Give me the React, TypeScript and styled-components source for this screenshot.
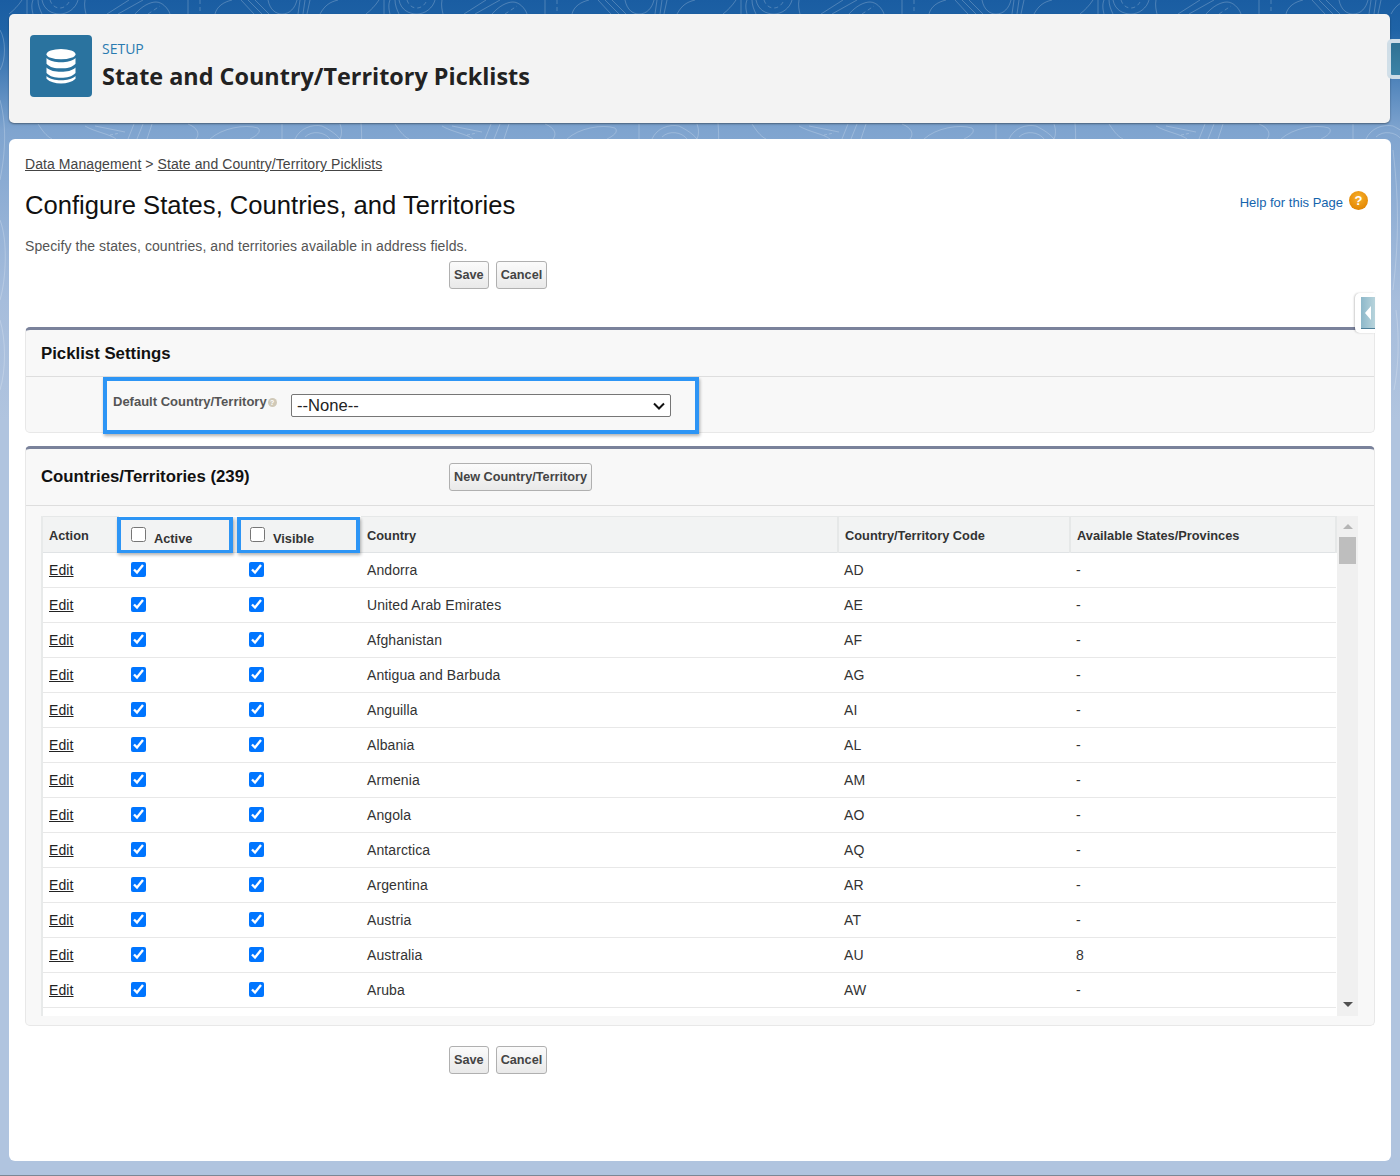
import styled, { createGlobalStyle } from "styled-components";

const GlobalStyle = createGlobalStyle`
  html, body {
    margin: 0;
    padding: 0;
  }
  body {
    font-family: "Liberation Sans", Arial, sans-serif;
    font-size: 14px;
    color: #333;
  }
`;

const countries = [
  ["Andorra", "AD", "-"],
  ["United Arab Emirates", "AE", "-"],
  ["Afghanistan", "AF", "-"],
  ["Antigua and Barbuda", "AG", "-"],
  ["Anguilla", "AI", "-"],
  ["Albania", "AL", "-"],
  ["Armenia", "AM", "-"],
  ["Angola", "AO", "-"],
  ["Antarctica", "AQ", "-"],
  ["Argentina", "AR", "-"],
  ["Austria", "AT", "-"],
  ["Australia", "AU", "8"],
  ["Aruba", "AW", "-"],
];

function ButtonRow({ top }: { top: number }) {
  return (
    <Buttons $top={top}>
      <Button>Save</Button>
      <Button>Cancel</Button>
    </Buttons>
  );
}

export default function App() {
  return (
    <Page>
      <GlobalStyle />
      <Contours width="1400" height="420">
        <defs>
          <pattern id="topo" width="357" height="420" patternUnits="userSpaceOnUse">
            <g fill="none" stroke="#fff" strokeOpacity="0.22">
              <path d="M22 0C18 6 14 10 9 14M27 0V14M33 0C31 5 32 10 33 14M38 0C38 5 40 10 42 14" />
              <path d="M42 0C44 10 52 14 60 14C68 14 76 8 78 0M85 0C84 5 85 10 86 14" />
              <path d="M50 0C52 6 56 8 60 8C64 8 68 5 70 0" strokeDasharray="4 3" />
              <path d="M129 0L107 14M143 0L118 14M135 14C142 6 150 2 156 2C162 2 168 8 170 14" />
              <path d="M148 14L160 6M200 0V14" strokeDasharray="4 3" />
              <path d="M188 0V14M215 14C217 6 224 2 232 0" />
              <path d="M241 0L254 14M248 0L262 14M255 0L269 14" />
              <path d="M268 0C270 10 276 14 282 14C290 14 295 8 297 0M300 0L298 14M305 0L303 14M310 0L307 14M320 14C325 5 330 2 338 0" />
              <path d="M38 124C42 130 46 136 52 139M85 126C95 132 110 134 116 139M95 126L125 132M134 124L128 139M143 124L137 139M152 124L147 139" />
              <path d="M110 135L120 133" strokeDasharray="3 2" />
              <path d="M188 124C198 128 200 134 196 139M210 139C222 128 245 124 258 128C262 132 256 136 250 139M282 124V139" />
              <path d="M295 139C300 128 312 124 322 126C330 130 336 134 340 139M305 137C312 130 325 132 330 139M340 124C342 130 342 134 340 139" />
              <path d="M0 30C6 40 6 60 0 70M0 100C8 130 4 160 0 180M0 220C8 240 6 280 0 300M0 320C6 340 6 370 0 390" />
              <path d="M322 150C328 200 328 240 322 290M325 310C329 340 327 370 323 390" />
            </g>
          </pattern>
        </defs>
        <rect width="1400" height="420" fill="url(#topo)" />
      </Contours>
      <HeaderCard>
        <IconTile>
          <svg width="30" height="36" viewBox="2 0 30 38" preserveAspectRatio="none">
            <ellipse cx="17" cy="6.5" rx="14.5" ry="5.5" fill="#fff" />
            <path d="M2.5 10.5C6 14 11 15 17 15s11-1 14.5-4.5v6C28 20.5 23 21.5 17 21.5S6 20.5 2.5 16.5z" fill="#fff" />
            <path d="M2.5 20.5C6 24 11 25 17 25s11-1 14.5-4.5v6C28 30.5 23 31.5 17 31.5S6 30.5 2.5 26.5z" fill="#fff" />
            <path d="M2.5 29.5C6 33 11 34 17 34s11-1 14.5-4.5v3C28 36 23 37.5 17 37.5S6 36 2.5 32.5z" fill="#fff" />
          </svg>
        </IconTile>
        <HeaderText>
          <Eyebrow>SETUP</Eyebrow>
          <HeaderTitle>State and Country/Territory Picklists</HeaderTitle>
        </HeaderText>
      </HeaderCard>
      <EdgeTab />

      <MainCard>
        <Breadcrumb>
          <a>Data Management</a> &gt; <a>State and Country/Territory Picklists</a>
        </Breadcrumb>
        <TitleRow>
          <PageTitle>Configure States, Countries, and Territories</PageTitle>
          <HelpLink>
            Help for this Page
            <HelpIcon>?</HelpIcon>
          </HelpLink>
        </TitleRow>
        <Description>
          Specify the states, countries, and territories available in address fields.
        </Description>
        <ButtonRow top={6} />

        <SidebarHandle>
          <svg width="14" height="32" viewBox="0 0 14 32">
            <defs>
              <linearGradient id="handle" x1="0" x2="1" y1="0" y2="0">
                <stop offset="0" stopColor="#8db8ca" />
                <stop offset="1" stopColor="#b8d4dc" />
              </linearGradient>
            </defs>
            <rect width="14" height="32" fill="url(#handle)" />
            <path d="M4 16l6-7v14z" fill="#fff" />
            <rect y="31" width="14" height="1" fill="#4d7f99" />
          </svg>
        </SidebarHandle>

        <Section $top={38}>
          <SectionHeader $height={47} $padTop={2}>
            <SectionTitle>Picklist Settings</SectionTitle>
          </SectionHeader>
          <SettingsBody>
            <Highlight>
              <FieldLabel>
                Default Country/Territory
                <InfoDot>?</InfoDot>
              </FieldLabel>
              <SelectWrap>
                <CountrySelect defaultValue="none">
                  <option value="none">--None--</option>
                </CountrySelect>
                <SelectChevron width="12" height="8" viewBox="0 0 12 8">
                  <path d="M1 1.5l5 5 5-5" fill="none" stroke="#111" strokeWidth="2" />
                </SelectChevron>
              </SelectWrap>
            </Highlight>
          </SettingsBody>
        </Section>

        <Section $top={13}>
          <SectionHeader $height={57}>
            <SectionTitle $width={408}>Countries/Territories (239)</SectionTitle>
            <Button>New Country/Territory</Button>
          </SectionHeader>
          <TableBody>
            <TableScroll>
              <Table>
                <colgroup>
                  <col width="75" />
                  <col width="118" />
                  <col width="125" />
                  <col width="477" />
                  <col width="232" />
                  <col />
                </colgroup>
                <thead>
                  <tr>
                    <Th>Action</Th>
                    <BoxedTh>
                      <BoxedHeading $width={116} $shift={-2} $inset={10}>
                        <HeadCheck type="checkbox" />
                        Active
                      </BoxedHeading>
                    </BoxedTh>
                    <BoxedTh>
                      <BoxedHeading $width={123} $shift={1} $inset={9}>
                        <HeadCheck type="checkbox" />
                        Visible
                      </BoxedHeading>
                    </BoxedTh>
                    <Th>Country</Th>
                    <Th>Country/Territory Code</Th>
                    <Th>Available States/Provinces</Th>
                  </tr>
                </thead>
                <tbody>
                  {countries.map(([name, code, states]) => (
                    <tr key={code}>
                      <Td>
                        <EditLink>Edit</EditLink>
                      </Td>
                      <CheckTd>
                        <RowCheck type="checkbox" defaultChecked />
                      </CheckTd>
                      <CheckTd>
                        <RowCheck type="checkbox" defaultChecked />
                      </CheckTd>
                      <Td>{name}</Td>
                      <Td>{code}</Td>
                      <Td>{states}</Td>
                    </tr>
                  ))}
                </tbody>
              </Table>
            </TableScroll>
            <ScrollTrack>
              <ScrollArrow $color="#b5b5b5" $up />
              <ScrollThumb />
              <ScrollArrow $color="#505050" />
            </ScrollTrack>
          </TableBody>
        </Section>

        <ButtonRow top={20} />
      </MainCard>
    </Page>
  );
}

const Page = styled.div`
  position: relative;
  box-sizing: border-box;
  width: 1400px;
  height: 1176px;
  padding: 14px 9px 0;
  overflow: hidden;
  background: linear-gradient(#1a5da2 0, #1f63a6 30px, #7fa4cf 130px, #a6bddc 300px, #b0c4df 420px);
  border-bottom: 1px solid #7d8794;
`;

const Contours = styled.svg`
  position: absolute;
  top: 0;
  left: 0;
`;

const HeaderCard = styled.header`
  position: relative;
  box-sizing: border-box;
  display: flex;
  align-items: flex-start;
  gap: 10px;
  width: 1381px;
  height: 109px;
  padding: 21px 21px 0;
  background: #f3f3f3;
  border-radius: 5px;
  box-shadow: 0 1px 2px rgba(0, 0, 0, 0.4);
`;

const IconTile = styled.div`
  display: flex;
  align-items: center;
  justify-content: center;
  width: 62px;
  height: 62px;
  background: #2a739f;
  border-radius: 4px;
`;

const HeaderText = styled.div`
  display: flex;
  flex-direction: column;
`;

const Eyebrow = styled.div`
  margin-top: 4px;
  font-family: "Open Sans", sans-serif;
  font-size: 14px;
  line-height: 20px;
  color: #2a7ab0;
`;

const HeaderTitle = styled.h1`
  margin: 1px 0 0;
  font-family: "Open Sans", sans-serif;
  font-size: 23.4px;
  line-height: 32px;
  font-weight: 700;
  color: #222;
`;

const EdgeTab = styled.div`
  position: absolute;
  top: 39px;
  left: 1387px;
  width: 13px;
  height: 40px;
  box-sizing: border-box;
  background: linear-gradient(#2f7193, #3d83a6);
  border: 4px solid rgba(236, 240, 245, 0.85);
  border-right: 0;
  border-radius: 5px 0 0 5px;
`;

const MainCard = styled.main`
  position: relative;
  box-sizing: border-box;
  width: 1382px;
  height: 1022px;
  margin-top: 16px;
  padding: 15px 16px 0;
  background: #fff;
  border-radius: 6px;
`;

const Breadcrumb = styled.div`
  font-size: 14px;
  line-height: 20px;
  letter-spacing: 0.08px;
  color: #444;

  a {
    text-decoration: underline;
  }
`;

const TitleRow = styled.div`
  display: flex;
  align-items: flex-start;
  justify-content: space-between;
  margin-top: 15px;
  padding-right: 7px;
`;

const PageTitle = styled.h2`
  margin: 0;
  font-size: 25.6px;
  line-height: 32px;
  font-weight: 400;
  color: #111;
`;

const HelpLink = styled.div`
  display: flex;
  align-items: center;
  gap: 6px;
  margin-top: 4px;
  font-size: 13px;
  line-height: 20px;
  color: #1464ad;
`;

const HelpIcon = styled.span`
  display: flex;
  align-items: center;
  justify-content: center;
  width: 19px;
  height: 19px;
  margin-top: -5px;
  border-radius: 50%;
  background: radial-gradient(circle at 50% 35%, #f7b02c, #e58a06 70%, #b96d08);
  color: #fff;
  font-size: 13px;
  font-weight: 700;
`;

const Description = styled.p`
  margin: 16px 0 0;
  font-size: 14px;
  line-height: 18px;
  letter-spacing: 0.08px;
  color: #555;
`;

const Buttons = styled.div<{ $top: number }>`
  display: flex;
  gap: 7px;
  margin-top: ${(p) => p.$top}px;
  padding-left: 424px;
`;

const Button = styled.button`
  box-sizing: border-box;
  height: 28px;
  padding: 0 4px;
  font-family: "Liberation Sans", Arial, sans-serif;
  font-size: 12.7px;
  font-weight: 700;
  color: #444;
  background: linear-gradient(#fbfbfb, #e9e9e9);
  border: 1px solid #b0b0b0;
  border-radius: 3px;
`;

const SidebarHandle = styled.div`
  position: absolute;
  top: 154px;
  left: 1346px;
  display: flex;
  box-sizing: border-box;
  width: 20px;
  height: 40px;
  padding: 4px 0 4px 6px;
  background: #fff;
  border-radius: 5px 0 0 5px;
  box-shadow: -1px 0 2px rgba(0, 0, 0, 0.2);
`;

const Section = styled.section<{ $top: number }>`
  box-sizing: border-box;
  width: 1350px;
  margin-top: ${(p) => p.$top}px;
  background: #f8f8f8;
  border: 1px solid #e8e8e8;
  border-top: 3px solid #7a829b;
  border-radius: 5px;
`;

const SectionHeader = styled.div<{ $height: number; $padTop?: number }>`
  display: flex;
  align-items: center;
  box-sizing: border-box;
  height: ${(p) => p.$height}px;
  padding: ${(p) => p.$padTop ?? 0}px 15px 0;
  border-bottom: 1px solid #dedede;
`;

const SectionTitle = styled.h3<{ $width?: number }>`
  margin: 0;
  width: ${(p) => (p.$width ? `${p.$width}px` : "auto")};
  font-size: 16.8px;
  font-weight: 700;
  color: #111;
`;

const SettingsBody = styled.div`
  height: 55px;
`;

const Highlight = styled.div`
  display: flex;
  align-items: flex-start;
  box-sizing: border-box;
  width: 596px;
  height: 57px;
  margin-left: 77px;
  padding: 13px 0 0 6px;
  border: 4px solid #2d95f5;
  box-shadow: 1px 2px 3px rgba(0, 0, 0, 0.3);
`;

const FieldLabel = styled.label`
  display: flex;
  width: 178px;
  font-size: 13px;
  line-height: 16px;
  font-weight: 700;
  color: #555;
`;

const InfoDot = styled.span`
  display: inline-flex;
  align-items: center;
  justify-content: center;
  width: 9px;
  height: 9px;
  margin: 4px 0 0 1px;
  border-radius: 50%;
  background: #d0c9b8;
  color: #fff;
  font-size: 7px;
`;

const SelectWrap = styled.div`
  position: relative;
  width: 380px;
  height: 23px;
`;

const CountrySelect = styled.select`
  appearance: none;
  display: block;
  box-sizing: border-box;
  width: 100%;
  height: 100%;
  padding: 0 0 0 5px;
  font-family: "Liberation Sans", Arial, sans-serif;
  font-size: 16.6px;
  color: #222;
  background: #fff;
  border: 1px solid #767676;
  border-radius: 2px;
`;

const SelectChevron = styled.svg`
  position: absolute;
  top: 8px;
  right: 6px;
  pointer-events: none;
`;

const TableBody = styled.div`
  display: flex;
  height: 519px;
  padding: 10px 16px 9px 15px;
  box-sizing: border-box;
`;

const TableScroll = styled.div`
  width: 1296px;
  height: 500px;
  overflow: hidden;
  background: #fff;
  border-left: 2px solid #e8eaea;
  box-sizing: border-box;
`;

const Table = styled.table`
  width: 100%;
  table-layout: fixed;
  border-collapse: collapse;
`;

const Th = styled.th`
  box-sizing: border-box;
  height: 36px;
  padding: 1px 6px 0;
  text-align: left;
  font-size: 12.8px;
  font-weight: 700;
  color: #333;
  background: #f2f3f3;
  border-top: 1px solid #e6e8e8;
  border-bottom: 1px solid #e0e3e5;
  border-right: 2px solid #e6e8e8;
`;

const BoxedTh = styled(Th)`
  padding: 0;
  vertical-align: top;
  border-top: 0;
  border-right: 0;
`;

const BoxedHeading = styled.div<{ $width: number; $shift: number; $inset: number }>`
  position: relative;
  left: ${(p) => p.$shift}px;
  display: flex;
  align-items: flex-end;
  gap: 8px;
  box-sizing: border-box;
  width: ${(p) => p.$width}px;
  height: 36px;
  margin-bottom: -1px;
  padding: 0 0 4px ${(p) => p.$inset}px;
  border-style: solid;
  border-color: #2d95f5;
  border-width: 3px 4px;
  box-shadow: 1px 2px 3px rgba(0, 0, 0, 0.3);
`;

const HeadCheck = styled.input`
  width: 15px;
  height: 15px;
  margin: 0 0 4px;
`;

const Td = styled.td`
  box-sizing: border-box;
  height: 35px;
  padding: 0 6px;
  font-size: 14px;
  letter-spacing: 0.1px;
  color: #333;
  border-bottom: 1px solid #e8e8e8;
`;

const CheckTd = styled(Td)`
  padding-left: 13px;
`;

const RowCheck = styled.input`
  display: block;
  width: 15px;
  height: 15px;
  margin: -1px 0 0;
`;

const EditLink = styled.a`
  color: #222;
  text-decoration: underline;
`;

const ScrollTrack = styled.div`
  position: relative;
  display: flex;
  flex-direction: column;
  align-items: center;
  justify-content: space-between;
  width: 21px;
  height: 500px;
  padding: 8px 0 9px;
  box-sizing: border-box;
  background: #f0f0f0;
`;

const ScrollArrow = styled.div<{ $color: string; $up?: boolean }>`
  width: 0;
  height: 0;
  border-left: 5px solid transparent;
  border-right: 5px solid transparent;
  ${(p) =>
    p.$up
      ? `border-bottom: 5px solid ${p.$color};`
      : `border-top: 5px solid ${p.$color};`}
`;

const ScrollThumb = styled.div`
  position: absolute;
  top: 21px;
  left: 2px;
  width: 17px;
  height: 27px;
  background: #bebebe;
`;
